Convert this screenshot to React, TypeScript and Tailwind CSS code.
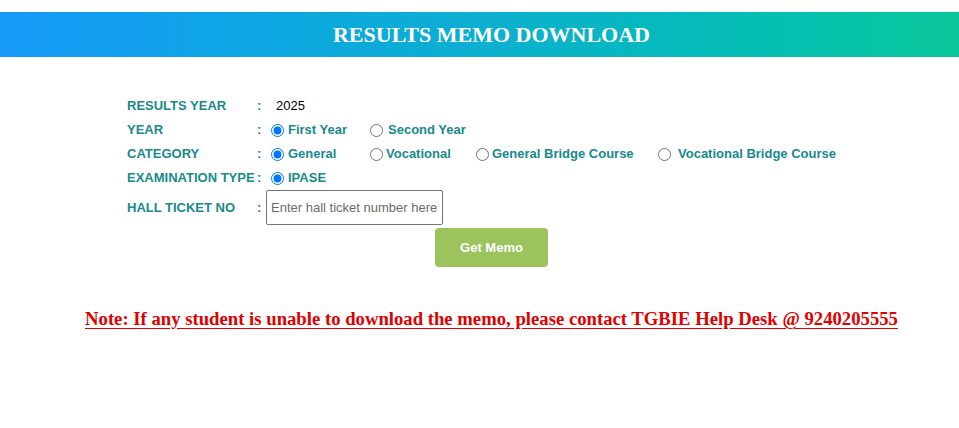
import React, { useState } from "react";

const sans = { fontFamily: '"Liberation Sans", Arial, sans-serif' };
const serif = { fontFamily: '"Liberation Serif", "Times New Roman", serif' };

const Radio = ({
  checked,
  label,
  gap,
  width,
  onChange,
}: {
  checked: boolean;
  label: string;
  gap: string;
  width?: string;
  onChange: () => void;
}) => {
  return (
    <label className={`flex items-center ${gap} ${width ?? ""} cursor-pointer`}>
      <input
        type="radio"
        checked={checked}
        onChange={onChange}
        className="m-0 w-[13px] h-[13px] accent-[#0075ff]"
      />
      <span className="text-[13px] font-bold text-[#178a8c]">{label}</span>
    </label>
  );
};

export default function App() {
  const [year, setYear] = useState("first");
  const [category, setCategory] = useState("general");
  const [hallTicket, setHallTicket] = useState("");

  return (
    <div className="w-full overflow-hidden bg-white min-h-[428px]" style={sans}>
      <div className="w-[983px]">
        <div className="mt-[12px] h-[45px] flex items-center justify-center bg-gradient-to-r from-[#1799f8] via-[#0db0cf] to-[#0bc898]">
          <h1 className="text-[22px] font-bold text-white" style={serif}>
            RESULTS MEMO DOWNLOAD
          </h1>
        </div>

        <div className="pl-[127px] mt-[37px] flex flex-col">
          <div className="flex items-center h-[24px]">
            <div className="w-[130px] text-[13px] font-bold text-[#178a8c]">RESULTS YEAR</div>
            <div className="w-[19px] text-[13px] font-bold text-[#178a8c]">:</div>
            <div className="text-[13px] text-black">2025</div>
          </div>

          <div className="flex items-center h-[24px]">
            <div className="w-[130px] text-[13px] font-bold text-[#178a8c]">YEAR</div>
            <div className="w-[14px] text-[13px] font-bold text-[#178a8c]">:</div>
            <Radio
              checked={year === "first"}
              label="First Year"
              gap="gap-[4px]"
              width="w-[99px]"
              onChange={() => setYear("first")}
            />
            <Radio
              checked={year === "second"}
              label="Second Year"
              gap="gap-[5px]"
              onChange={() => setYear("second")}
            />
          </div>

          <div className="flex items-center h-[24px]">
            <div className="w-[130px] text-[13px] font-bold text-[#178a8c]">CATEGORY</div>
            <div className="w-[14px] text-[13px] font-bold text-[#178a8c]">:</div>
            <Radio
              checked={category === "general"}
              label="General"
              gap="gap-[4px]"
              width="w-[99px]"
              onChange={() => setCategory("general")}
            />
            <Radio
              checked={category === "vocational"}
              label="Vocational"
              gap="gap-[3px]"
              width="w-[106px]"
              onChange={() => setCategory("vocational")}
            />
            <Radio
              checked={category === "gbc"}
              label="General Bridge Course"
              gap="gap-[3px]"
              width="w-[182px]"
              onChange={() => setCategory("gbc")}
            />
            <Radio
              checked={category === "vbc"}
              label="Vocational Bridge Course"
              gap="gap-[7px]"
              onChange={() => setCategory("vbc")}
            />
          </div>

          <div className="flex items-center h-[24px]">
            <div className="w-[130px] text-[13px] font-bold text-[#178a8c] whitespace-nowrap">
              EXAMINATION TYPE
            </div>
            <div className="w-[14px] text-[13px] font-bold text-[#178a8c]">:</div>
            <Radio checked={true} label="IPASE" gap="gap-[4px]" onChange={() => {}} />
          </div>

          <div className="flex items-center h-[35px]">
            <div className="w-[130px] text-[13px] font-bold text-[#178a8c]">HALL TICKET NO</div>
            <div className="w-[9px] text-[13px] font-bold text-[#178a8c]">:</div>
            <input
              type="text"
              value={hallTicket}
              onChange={(e) => setHallTicket(e.target.value)}
              placeholder="Enter hall ticket number here"
              className="w-[177px] h-[35px] border border-[#767676] rounded-[2px] pl-[4px] pr-[2px] text-[13px] text-black placeholder:text-[#6b6b6b] outline-none"
              style={sans}
            />
          </div>
        </div>

        <div className="flex justify-center mt-[3px]">
          <button className="w-[113px] h-[39px] rounded-[4px] bg-[#9bc45d] text-white text-[13px] font-bold">
            Get Memo
          </button>
        </div>

        <div className="flex justify-center mt-[40px]">
          <p
            className="text-[18.7px] leading-[24px] font-bold text-[#e00000] underline underline-offset-[3px]"
            style={serif}
          >
            Note: If any student is unable to download the memo, please contact TGBIE Help Desk @ 9240205555
          </p>
        </div>
      </div>
    </div>
  );
}
